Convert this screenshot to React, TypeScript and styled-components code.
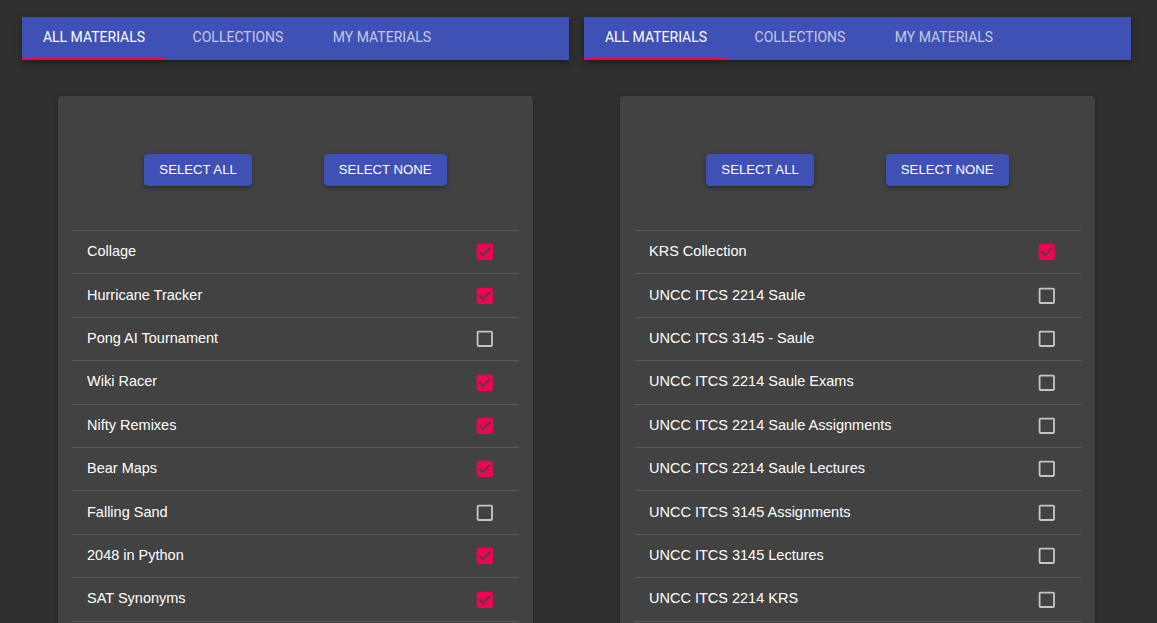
import React from "react";
import styled, { createGlobalStyle } from "styled-components";

const GlobalStyle = createGlobalStyle`
  html, body {
    margin: 0;
    padding: 0;
    background: #303030;
    overflow: hidden;
    height: 623px;
  }
  body {
    font-family: "Liberation Sans", Arial, sans-serif;
  }
`;

const Page = styled.div`
  display: grid;
  grid-template-columns: 547px 547px;
  column-gap: 15px;
  padding: 17px 26px 0 22px;
  align-items: start;
`;

const Column = styled.section`
  display: flex;
  flex-direction: column;
  align-items: center;
`;

const TabBar = styled.nav`
  align-self: stretch;
  display: flex;
  height: 43px;
  background: #3f51b5;
  box-shadow: 0 2px 4px -1px rgba(0, 0, 0, 0.2), 0 4px 5px 0 rgba(0, 0, 0, 0.14),
    0 1px 10px 0 rgba(0, 0, 0, 0.12);
`;

const Tab = styled.button<{ $active?: boolean }>`
  position: relative;
  width: 144px;
  height: 100%;
  border: 0;
  padding: 0 0 3px;
  margin: 0;
  background: transparent;
  font-family: Roboto, "Liberation Sans", sans-serif;
  font-weight: 400;
  font-size: 14px;
  text-transform: uppercase;
  color: ${(p) => (p.$active ? "#ffffff" : "rgba(255,255,255,0.7)")};
  display: flex;
  align-items: center;
  justify-content: center;
  cursor: pointer;
  &::after {
    content: "";
    position: absolute;
    left: 0;
    right: 0;
    bottom: 0;
    height: 2px;
    background: ${(p) => (p.$active ? "#f50057" : "transparent")};
  }
`;

const Card = styled.div`
  width: 475px;
  margin-top: 36px;
  background: #424242;
  border-radius: 4px;
  padding: 58px 14px 40px;
  box-sizing: border-box;
  box-shadow: 0 1px 5px 0 rgba(0, 0, 0, 0.2), 0 2px 2px 0 rgba(0, 0, 0, 0.14),
    0 3px 1px -2px rgba(0, 0, 0, 0.12);
`;

const ButtonRow = styled.div`
  display: flex;
  justify-content: center;
  gap: 72px;
  margin-bottom: 44px;
`;

const ActionButton = styled.button`
  height: 32px;
  padding: 0 15px 2px;
  border: 0;
  border-radius: 4px;
  background: #3f51b5;
  color: #ffffff;
  font-family: "Liberation Sans", Arial, sans-serif;
  font-size: 13.2px;
  text-transform: uppercase;
  cursor: pointer;
  box-shadow: 0 1px 5px 0 rgba(0, 0, 0, 0.2), 0 2px 2px 0 rgba(0, 0, 0, 0.14),
    0 3px 1px -2px rgba(0, 0, 0, 0.12);
`;

const List = styled.ul`
  list-style: none;
  margin: 0;
  padding: 0;
  border-bottom: 1px solid rgba(255, 255, 255, 0.12);
`;

const Row = styled.li`
  height: 43.4px;
  box-sizing: border-box;
  border-top: 1px solid rgba(255, 255, 255, 0.12);
  display: flex;
  align-items: center;
  justify-content: space-between;
  padding: 0 23px 0 15px;
`;

const Label = styled.span`
  font-family: "Liberation Sans", Arial, sans-serif;
  font-size: 14.5px;
  color: #ffffff;
  padding-bottom: 2px;
`;

const Check = styled.svg<{ $checked: boolean }>`
  width: 21.6px;
  height: 21.6px;
  display: block;
  fill: ${(p) => (p.$checked ? "#f50057" : "rgba(255,255,255,0.7)")};
`;

const CHECKED =
  "M19 3H5c-1.11 0-2 .9-2 2v14c0 1.1.89 2 2 2h14c1.11 0 2-.9 2-2V5c0-1.1-.89-2-2-2zm-9 14l-5-5 1.41-1.41L10 14.170l7.59-7.59L19 8l-9 9z";
const UNCHECKED =
  "M19 5v14H5V5h14m0-2H5c-1.1 0-2 .9-2 2v14c0 1.1.9 2 2 2h14c1.1 0 2-.9 2-2V5c0-1.1-.9-2-2-2z";

function CheckBox({ checked }: { checked: boolean }) {
  return (
    <Check viewBox="0 0 24 24" $checked={checked}>
      <path d={checked ? CHECKED : UNCHECKED} />
    </Check>
  );
}

type Item = { name: string; checked: boolean };

const materials: Item[] = [
  { name: "Collage", checked: true },
  { name: "Hurricane Tracker", checked: true },
  { name: "Pong AI Tournament", checked: false },
  { name: "Wiki Racer", checked: true },
  { name: "Nifty Remixes", checked: true },
  { name: "Bear Maps", checked: true },
  { name: "Falling Sand", checked: false },
  { name: "2048 in Python", checked: true },
  { name: "SAT Synonyms", checked: true },
];

const collections: Item[] = [
  { name: "KRS Collection", checked: true },
  { name: "UNCC ITCS 2214 Saule", checked: false },
  { name: "UNCC ITCS 3145 - Saule", checked: false },
  { name: "UNCC ITCS 2214 Saule Exams", checked: false },
  { name: "UNCC ITCS 2214 Saule Assignments", checked: false },
  { name: "UNCC ITCS 2214 Saule Lectures", checked: false },
  { name: "UNCC ITCS 3145 Assignments", checked: false },
  { name: "UNCC ITCS 3145 Lectures", checked: false },
  { name: "UNCC ITCS 2214 KRS", checked: false },
];

function Panel({ items }: { items: Item[] }) {
  return (
    <Column>
      <TabBar>
        <Tab $active>All Materials</Tab>
        <Tab>Collections</Tab>
        <Tab>My Materials</Tab>
      </TabBar>
      <Card>
        <ButtonRow>
          <ActionButton>Select All</ActionButton>
          <ActionButton>Select None</ActionButton>
        </ButtonRow>
        <List>
          {items.map((it) => (
            <Row key={it.name}>
              <Label>{it.name}</Label>
              <CheckBox checked={it.checked} />
            </Row>
          ))}
        </List>
      </Card>
    </Column>
  );
}

export default function App() {
  return (
    <>
      <GlobalStyle />
      <Page>
        <Panel items={materials} />
        <Panel items={collections} />
      </Page>
    </>
  );
}
